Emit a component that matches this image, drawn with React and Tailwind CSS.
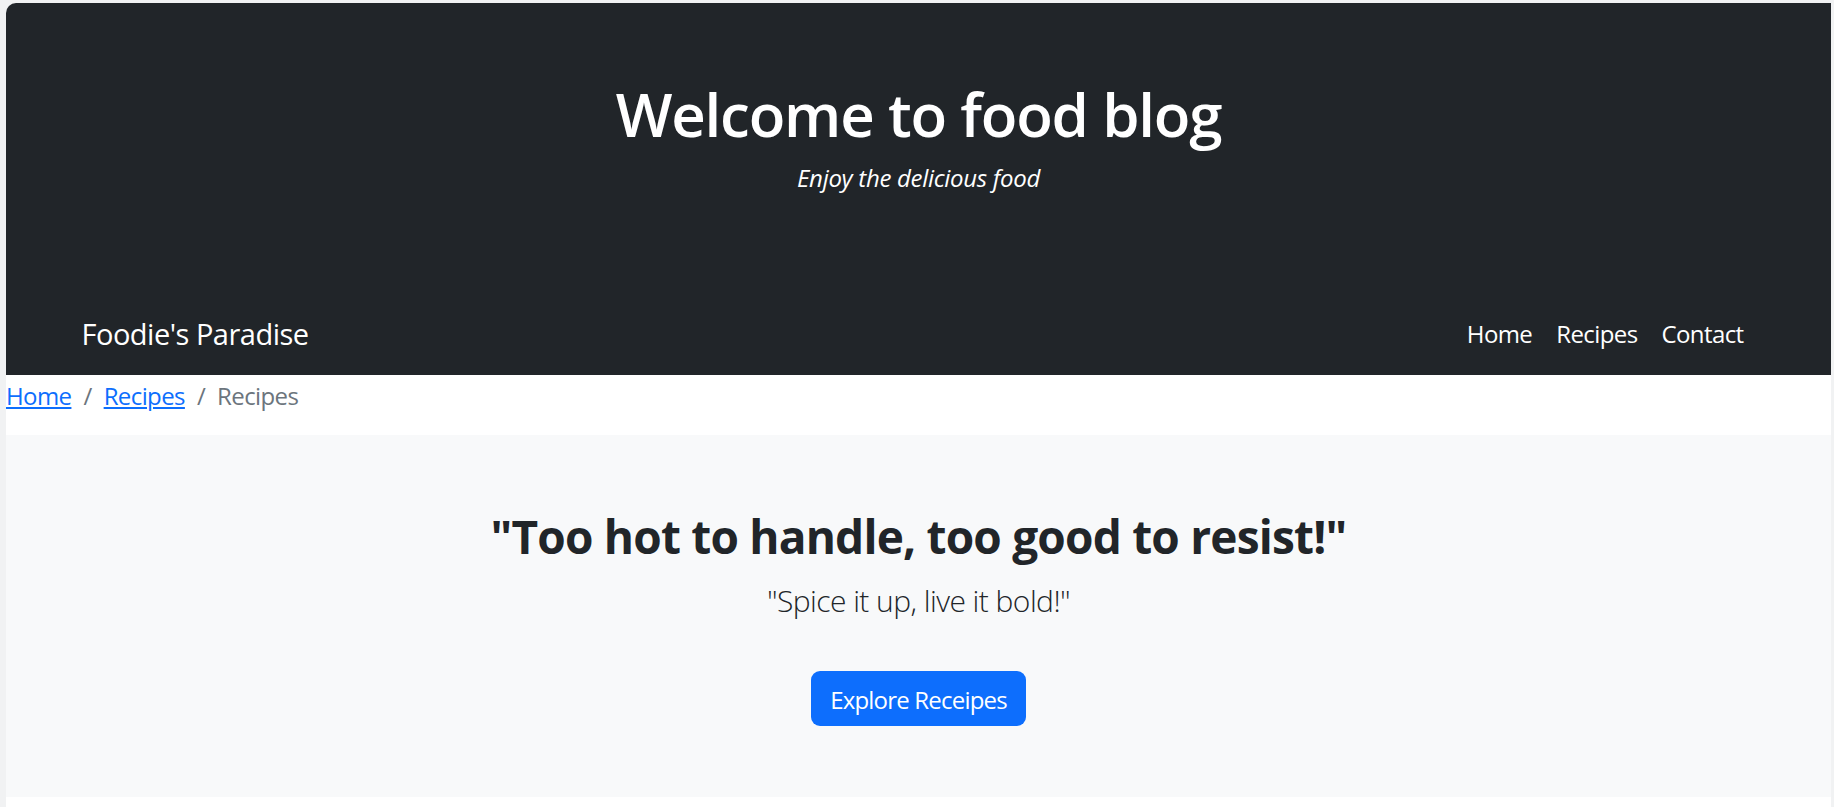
export default function App() {
  return (
    <div className="h-[807px] w-[1834px] overflow-hidden bg-[#f1f2f3] pl-[6px] pr-[3px] pt-[3px] font-['Open_Sans',_'Noto_Sans',_sans-serif]">
      <div className="h-[804px] overflow-hidden rounded-tl-[10px] bg-white">
        {/* Header */}
        <header className="bg-[#212529] text-white">
          <div className="flex h-[287px] flex-col items-center pt-[81px]">
            <h1 className="text-[60px] font-semibold leading-none tracking-[-1.2px]">Welcome to food blog</h1>
            <p className="mt-[22px] text-[24px] italic leading-none tracking-[-0.3px]">Enjoy the delicious food</p>
          </div>
          <nav className="mx-auto flex h-[85px] w-[1710px] items-center justify-between px-[18px]">
            <a href="#" className="pt-[1px] text-[29px] leading-none tracking-[-0.5px] text-white">Foodie's Paradise</a>
            <ul className="flex items-center pt-[2px]">
              <li><a href="#" className="block px-[12px] text-[24px] leading-none tracking-[-0.6px] text-white">Home</a></li>
              <li><a href="#" className="block px-[12px] text-[24px] leading-none tracking-[-0.6px] text-white">Recipes</a></li>
              <li><a href="#" className="block px-[12px] text-[24px] leading-none tracking-[-0.6px] text-white">Contact</a></li>
            </ul>
          </nav>
        </header>

        {/* Breadcrumb */}
        <ol className="mb-[24px] flex h-[36px] items-center pt-[5px] text-[24px] leading-[30px] tracking-[-0.6px] text-[#6c757d]">
          <li><a href="#" className="text-[#0d6efd] underline">Home</a></li>
          <li className="px-[12px]">/</li>
          <li><a href="#" className="text-[#0d6efd] underline">Recipes</a></li>
          <li className="px-[12px]">/</li>
          <li>Recipes</li>
        </ol>

        {/* Hero */}
        <section className="flex h-[362px] flex-col items-center bg-[#f8f9fa] pt-[78px] text-[#212529]">
          <h2 className="text-[46px] font-bold leading-none tracking-[-0.8px]">"Too hot to handle, too good to resist!"</h2>
          <p className="mt-[27px] text-[30px] font-light leading-none tracking-[-0.55px]">"Spice it up, live it bold!"</p>
          <button className="mt-[55px] flex h-[55px] w-[215px] items-center justify-center rounded-[9px] bg-[#0d6efd] pt-[2px] text-[24px] leading-none tracking-[-0.8px] text-white">
            Explore Receipes
          </button>
        </section>
      </div>
    </div>
  );
}
